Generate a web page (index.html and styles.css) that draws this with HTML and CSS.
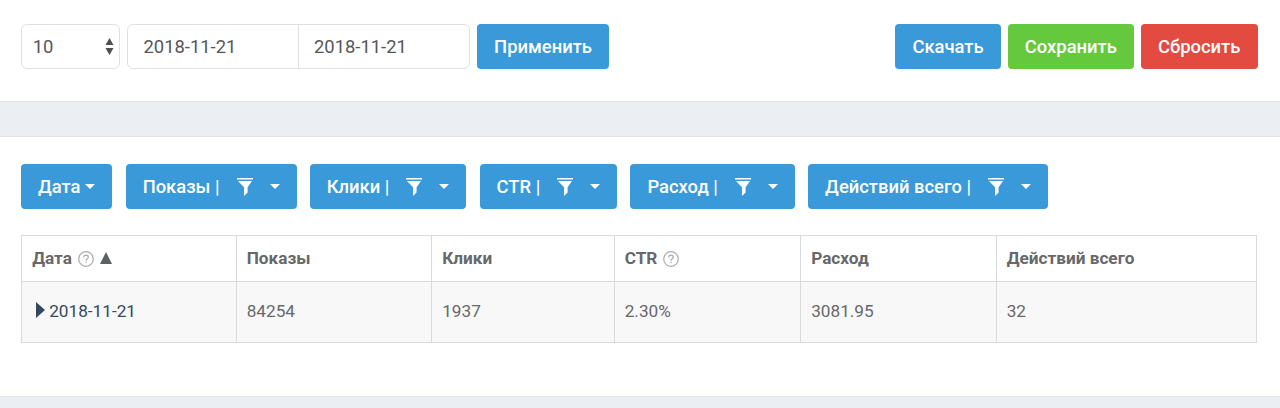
FILE: index.html
```html
<!DOCTYPE html>
<html lang="ru">
<head>
    <meta charset="UTF-8">
    <meta name="viewport" content="width=device-width, initial-scale=1.0">
    <title>Статистика</title>
    <link rel="stylesheet" href="styles.css">
</head>
<body>
    <svg width="0" height="0" class="sprite">
        <symbol id="filter" viewBox="0 0 16 18">
            <path d="M0 0h16v1.6H0zM1 3h14l-4.4 6.2v5.3L7 18V9.2z"/>
        </symbol>
        <symbol id="help" viewBox="0 0 16 16">
            <circle cx="8" cy="8" r="7.3"/>
            <path d="M5.7 6.4c0-1.4 1-2.3 2.3-2.3s2.3.8 2.3 2.1c0 1.6-2.2 1.7-2.2 3.5M8.1 10.8v1.3"/>
        </symbol>
    </svg>

    <section class="panel toolbar">
        <div class="select">
            <span>10</span>
            <svg class="select-arrows" viewBox="0 0 8 17"><path d="M4 0l4 7H0zM0 10h8l-4 7z"/></svg>
        </div>
        <div class="date-range">
            <input type="text" value="2018-11-21">
            <input type="text" value="2018-11-21">
        </div>
        <button class="btn">Применить</button>
        <div class="actions">
            <button class="btn">Скачать</button>
            <button class="btn btn-success">Сохранить</button>
            <button class="btn btn-danger">Сбросить</button>
        </div>
    </section>

    <section class="panel report">
        <div class="filters">
            <button class="btn btn-date">Дата<i class="caret"></i></button>
            <button class="btn btn-filter">Показы |<svg class="funnel"><use href="#filter"/></svg><i class="caret"></i></button>
            <button class="btn btn-filter">Клики |<svg class="funnel"><use href="#filter"/></svg><i class="caret"></i></button>
            <button class="btn btn-filter">CTR |<svg class="funnel"><use href="#filter"/></svg><i class="caret"></i></button>
            <button class="btn btn-filter">Расход |<svg class="funnel"><use href="#filter"/></svg><i class="caret"></i></button>
            <button class="btn btn-filter">Действий всего |<svg class="funnel"><use href="#filter"/></svg><i class="caret"></i></button>
        </div>

        <table>
            <colgroup>
                <col class="col-date">
                <col class="col-shows">
                <col class="col-clicks">
                <col class="col-ctr">
                <col class="col-cost">
                <col>
            </colgroup>
            <thead>
                <tr>
                    <th>Дата<svg class="help"><use href="#help"/></svg><svg class="sort" viewBox="0 0 12 12"><path d="M6 0l6 12H0z"/></svg></th>
                    <th>Показы</th>
                    <th>Клики</th>
                    <th>CTR<svg class="help"><use href="#help"/></svg></th>
                    <th>Расход</th>
                    <th>Действий всего</th>
                </tr>
            </thead>
            <tbody>
                <tr>
                    <td><a href="#"><svg class="expand" viewBox="0 0 9 16"><path d="M0 0l9 8-9 8z"/></svg>2018-11-21</a></td>
                    <td>84254</td>
                    <td>1937</td>
                    <td>2.30%</td>
                    <td>3081.95</td>
                    <td>32</td>
                </tr>
            </tbody>
        </table>
    </section>
</body>
</html>
```
FILE: styles.css
```css
* {
    margin: 0;
    padding: 0;
    box-sizing: border-box;
}

body {
    font-family: Roboto, "Liberation Sans", sans-serif;
    font-size: 17.2px;
    color: #67686a;
    background: #ebeff3;
    overflow: hidden;
}

.sprite {
    display: block;
}

.panel {
    background: #fff;
    padding: 0 22.5px 0 21.2px;
    border-bottom: 1px solid #dfe3e6;
}

.toolbar {
    display: flex;
    gap: 7px;
    height: 102px;
    padding-top: 24px;
}

.select {
    display: flex;
    align-items: center;
    justify-content: space-between;
    width: 98.8px;
    height: 45px;
    padding: 0 5px 0 10.5px;
    border: 1px solid #dfe0e1;
    border-radius: 6px;
    font-size: 18.4px;
    color: #565758;
}

.select-arrows {
    width: 9px;
    height: 17px;
    fill: #4f5051;
}

.date-range {
    display: flex;
    width: 343px;
    height: 45px;
    border: 1px solid #dfe0e1;
    border-radius: 6px;
}

.date-range input {
    width: 50%;
    padding: 0 15px;
    border: 0;
    background: none;
    font: inherit;
    font-size: 18.4px;
    color: #565758;
}

.date-range input:first-child {
    width: 170px;
    padding-left: 15.5px;
}

.date-range input + input {
    border-left: 1px solid #dfe0e1;
}

.btn {
    display: flex;
    align-items: center;
    height: 45px;
    padding: 0 17.1px;
    border: 0;
    border-radius: 4px;
    background: #3a99d8;
    color: #fff;
    font: 500 18.4px Roboto, "Liberation Sans", sans-serif;
    white-space: nowrap;
}

.btn-success {
    background: #65c93d;
}

.btn-danger {
    background: #e34b41;
}

.actions {
    display: flex;
    gap: 7px;
    margin-left: auto;
}

.report {
    height: 261px;
    margin-top: 34px;
    padding-top: 27px;
    border-top: 1px solid #dfe3e6;
}

.filters {
    display: flex;
    gap: 13.2px;
    margin-bottom: 26px;
}

.caret {
    margin-left: 5px;
    border: 5px solid transparent;
    border-top-color: #fff;
    border-bottom: 0;
}

.funnel {
    width: 16px;
    height: 18px;
    margin-left: 17px;
    fill: #fff;
}

.btn-date {
    padding: 0 17px 0 16.8px;
}

.btn-filter {
    padding: 0 17px;
}

.btn-filter .caret {
    margin-left: 17px;
}

table {
    width: 1236px;
    table-layout: fixed;
    border-collapse: collapse;
}

.col-date { width: 214.5px; }
.col-shows { width: 195.5px; }
.col-clicks { width: 182.5px; }
.col-ctr { width: 186.5px; }
.col-cost { width: 195.5px; }

th,
td {
    padding: 0 10px;
    border: 1px solid #d9dada;
    text-align: left;
}

th {
    height: 46px;
    padding-bottom: 2px;
    font-weight: 700;
}

td {
    height: 61px;
    padding-bottom: 3px;
    background: #f8f8f8;
}

td a {
    color: #34495e;
    text-decoration: none;
}

.help {
    width: 16px;
    height: 16px;
    margin-left: 6px;
    vertical-align: -3px;
    fill: none;
    stroke: #a9aaab;
    stroke-width: 1.2;
}

.sort {
    width: 12px;
    height: 12px;
    margin-left: 6px;
    fill: #5f6061;
}

.expand {
    width: 9px;
    height: 16px;
    margin: 0 4px 0 4px;
    vertical-align: -1px;
    fill: #34495e;
}
```
